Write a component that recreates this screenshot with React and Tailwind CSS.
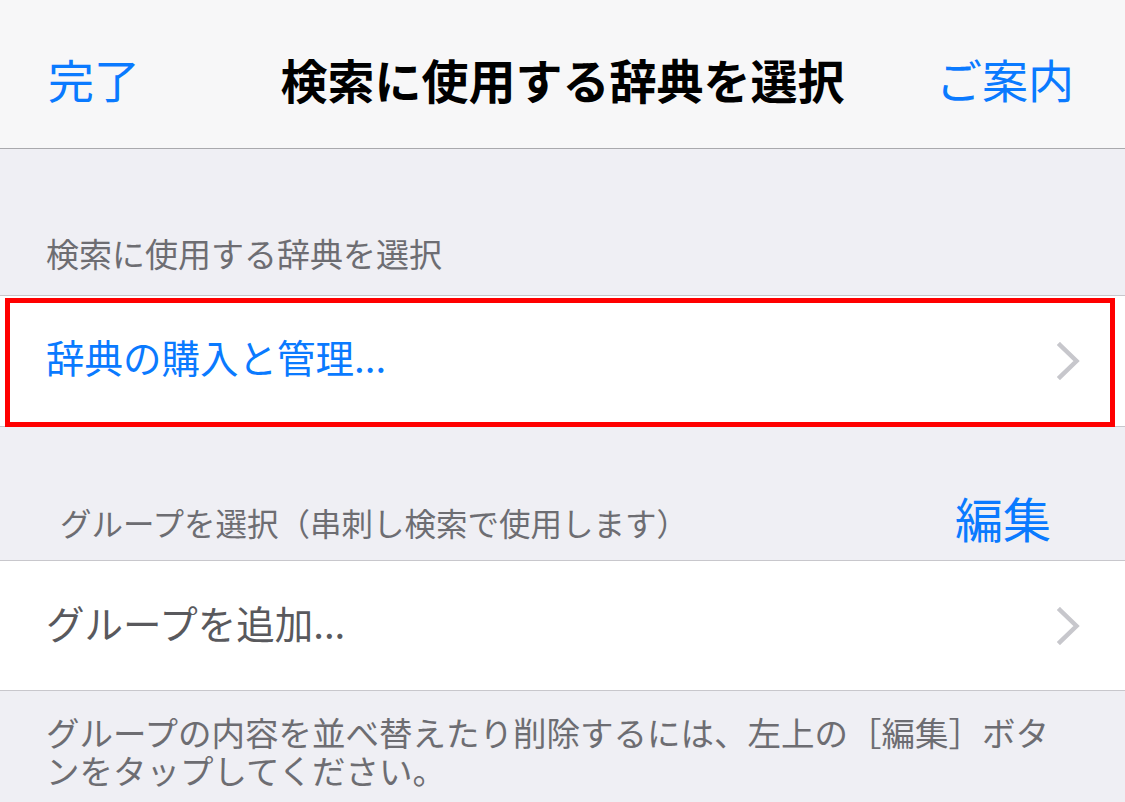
const Chevron = () => (
    <svg width="23" height="38" viewBox="0 0 23 38" fill="none">
        <polyline points="3,3 19.5,19 3,35" stroke="#c7c7cc" strokeWidth="4.5" strokeLinecap="square" strokeLinejoin="miter" />
    </svg>
)

const App = () => {
    return (
        <div className="w-[1125px] h-[802px] overflow-hidden bg-[#efeff4] font-['Noto_Sans_CJK_JP',sans-serif]">
            <header className="h-[149px] bg-[#f7f7f8] border-b border-[#a9a9ad] flex items-center justify-between pt-[8px] pl-[48px] pr-[51px] leading-none relative">
                <span className="text-[46px] text-[#0a7aff]">完了</span>
                <h1 className="absolute left-0 right-0 top-[8px] bottom-0 flex items-center justify-center text-[47px] font-bold text-black pointer-events-none">
                    検索に使用する辞典を選択
                </h1>
                <span className="text-[46px] text-[#0a7aff]">ご案内</span>
            </header>

            <div className="h-[146px] flex items-end pl-[46px] pb-[25px] leading-none">
                <span className="text-[33px] text-[#6d6d72]">検索に使用する辞典を選択</span>
            </div>

            <div className="relative bg-white border-y border-[#c8c7cc]">
                <div className="h-[130px] flex items-center justify-between pl-[46px] pr-[45px] leading-none">
                    <span className="text-[38.5px] text-[#0a7aff] mb-[10px]">辞典の購入と管理...</span>
                    <Chevron />
                </div>
                <div className="absolute top-[2px] left-[5px] right-[10px] -bottom-[1px] border-[5px] border-[#ff0000] pointer-events-none" />
            </div>

            <div className="h-[133px] flex items-end justify-between pl-[60px] pr-[74px] pb-[19px] leading-none">
                <span className="text-[31.5px] text-[#6d6d72] mb-[3px]">グループを選択（串刺し検索で使用します）</span>
                <span className="text-[48px] text-[#0a7aff]">編集</span>
            </div>

            <div className="bg-white border-y border-[#c8c7cc]">
                <div className="h-[129px] flex items-center justify-between pl-[46px] pr-[45px] leading-none">
                    <span className="text-[38.5px] text-[#59595d] mb-[6px]">グループを追加...</span>
                    <Chevron />
                </div>
            </div>

            <p className="pt-[22px] pl-[46px] pr-[60px] text-[33.5px] leading-[38px] text-[#6d6d72]">
                グループの内容を並べ替えたり削除するには、左上の［編集］ボタンをタップしてください。
            </p>
        </div>
    )
}

export default App
